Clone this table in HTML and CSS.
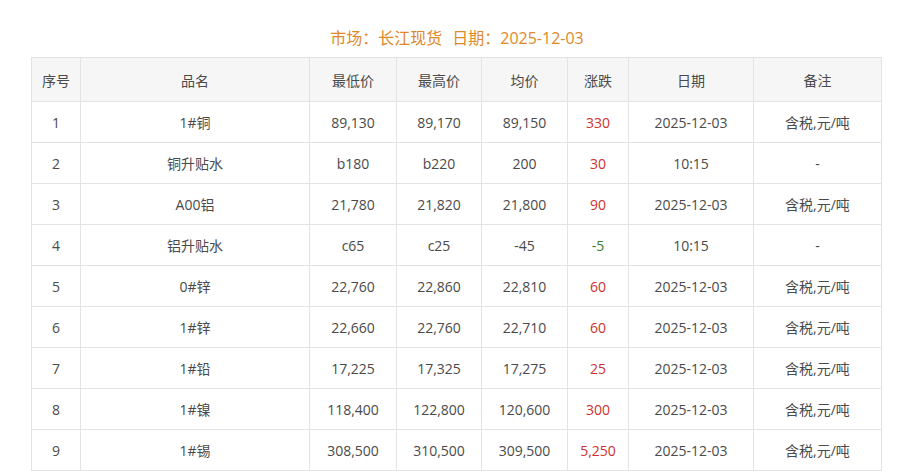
FILE: index.html
```html
<!DOCTYPE html>
<html lang="zh-CN">
<head>
<meta charset="utf-8">
<title>长江现货</title>
<link rel="stylesheet" href="styles.css">
</head>
<body>
<div class="title"><span>市场：长江现货</span><span class="gap">日期：2025-12-03</span></div>
<table class="price">
<colgroup>
<col class="c1"><col class="c2"><col class="c3"><col class="c4"><col class="c5"><col class="c6"><col class="c7"><col class="c8">
</colgroup>
<thead>
<tr><th>序号</th><th>品名</th><th>最低价</th><th>最高价</th><th>均价</th><th>涨跌</th><th>日期</th><th>备注</th></tr>
</thead>
<tbody>
<tr><td>1</td><td>1#铜</td><td>89,130</td><td>89,170</td><td>89,150</td><td class="up">330</td><td>2025-12-03</td><td>含税,元/吨</td></tr>
<tr><td>2</td><td>铜升贴水</td><td>b180</td><td>b220</td><td>200</td><td class="up">30</td><td>10:15</td><td>-</td></tr>
<tr><td>3</td><td>A00铝</td><td>21,780</td><td>21,820</td><td>21,800</td><td class="up">90</td><td>2025-12-03</td><td>含税,元/吨</td></tr>
<tr><td>4</td><td>铝升贴水</td><td>c65</td><td>c25</td><td>-45</td><td class="down">-5</td><td>10:15</td><td>-</td></tr>
<tr><td>5</td><td>0#锌</td><td>22,760</td><td>22,860</td><td>22,810</td><td class="up">60</td><td>2025-12-03</td><td>含税,元/吨</td></tr>
<tr><td>6</td><td>1#锌</td><td>22,660</td><td>22,760</td><td>22,710</td><td class="up">60</td><td>2025-12-03</td><td>含税,元/吨</td></tr>
<tr><td>7</td><td>1#铅</td><td>17,225</td><td>17,325</td><td>17,275</td><td class="up">25</td><td>2025-12-03</td><td>含税,元/吨</td></tr>
<tr><td>8</td><td>1#镍</td><td>118,400</td><td>122,800</td><td>120,600</td><td class="up">300</td><td>2025-12-03</td><td>含税,元/吨</td></tr>
<tr><td>9</td><td>1#锡</td><td>308,500</td><td>310,500</td><td>309,500</td><td class="up">5,250</td><td>2025-12-03</td><td>含税,元/吨</td></tr>
</tbody>
</table>
</body>
</html>
```

FILE: styles.css
```css
html, body {
  margin: 0;
  padding: 0;
  background: #fff;
}
body {
  font-family: "Open Sans", "Noto Sans CJK SC", sans-serif;
  color: #4a4a4a;
}
.title {
  text-align: center;
  font-size: 16px;
  line-height: 20px;
  color: #e0892b;
  padding: 28px 0 9px;
}
.title .gap {
  margin-left: 10px;
}
.price {
  border-collapse: collapse;
  table-layout: fixed;
  width: 850px;
  margin-left: 31px;
  font-size: 14px;
}
.c1 { width: 49px; }
.c2 { width: 229px; }
.c3 { width: 87px; }
.c4 { width: 85px; }
.c5 { width: 86px; }
.c6 { width: 61px; }
.c7 { width: 125px; }
.c8 { width: 128px; }
.price th, .price td {
  border: 1px solid #e3e3e3;
  text-align: center;
  padding: 0;
  font-weight: normal;
  white-space: nowrap;
}
.price th {
  background: #f6f6f6;
  height: 43px;
  color: #4a4a4a;
}
.price td {
  height: 40px;
}
.price td.up { color: #d0312d; }
.price td.down { color: #3b7d2a; }
```
